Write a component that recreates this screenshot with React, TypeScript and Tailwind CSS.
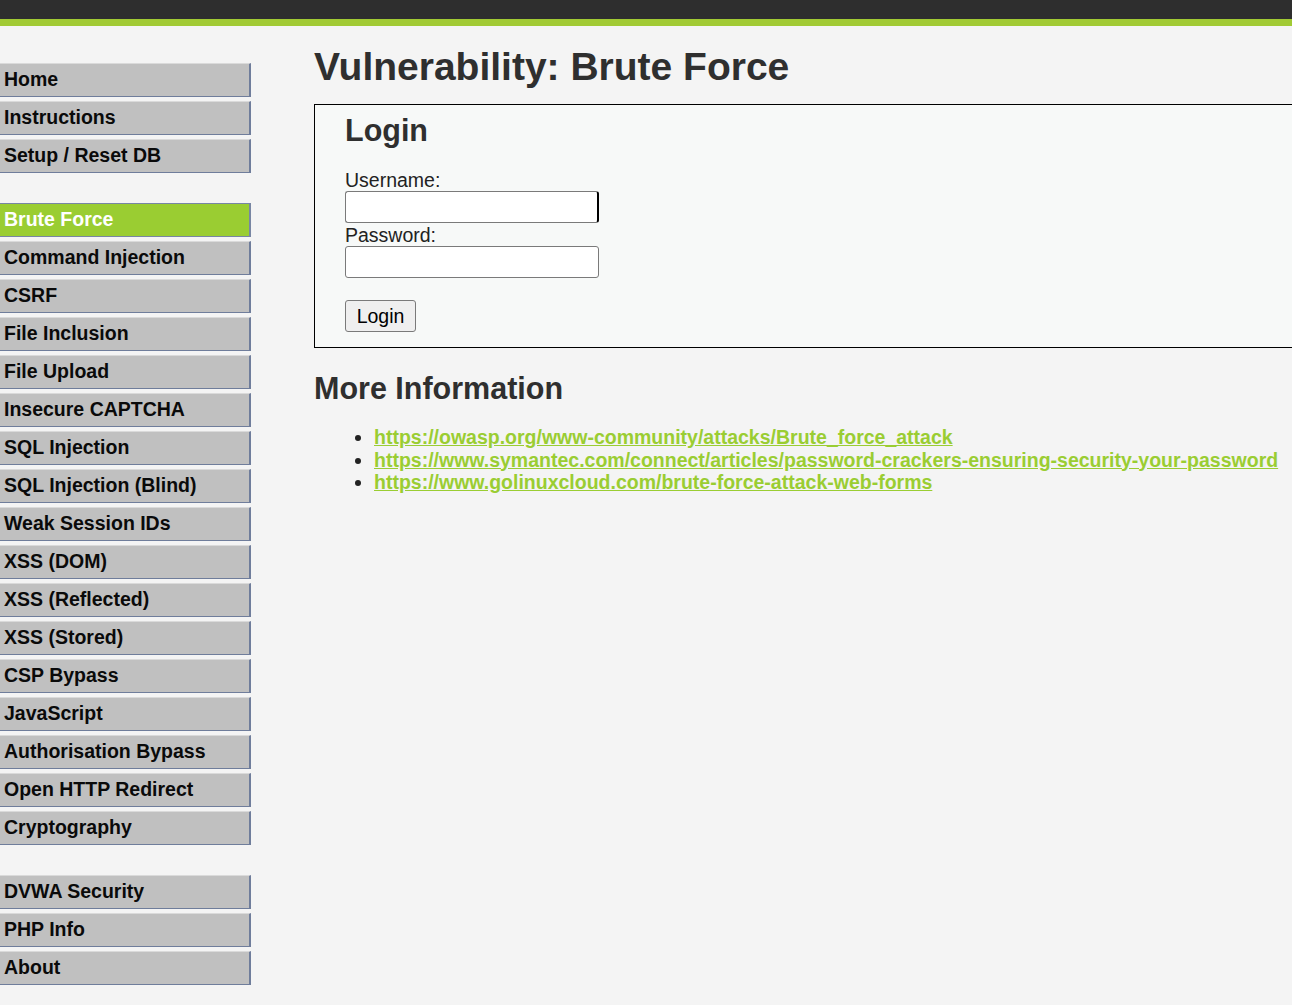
const groups: string[][] = [
  ['Home', 'Instructions', 'Setup / Reset DB'],
  [
    'Brute Force',
    'Command Injection',
    'CSRF',
    'File Inclusion',
    'File Upload',
    'Insecure CAPTCHA',
    'SQL Injection',
    'SQL Injection (Blind)',
    'Weak Session IDs',
    'XSS (DOM)',
    'XSS (Reflected)',
    'XSS (Stored)',
    'CSP Bypass',
    'JavaScript',
    'Authorisation Bypass',
    'Open HTTP Redirect',
    'Cryptography',
  ],
  ['DVWA Security', 'PHP Info', 'About'],
];

const links = [
  'https://owasp.org/www-community/attacks/Brute_force_attack',
  'https://www.symantec.com/connect/articles/password-crackers-ensuring-security-your-password',
  'https://www.golinuxcloud.com/brute-force-attack-web-forms',
];

function MenuItem({ label }: { label: string }) {
  const active = label === 'Brute Force';
  return (
    <li>
      <a
        href="#"
        className={
          active
            ? 'block h-[34px] w-[251px] pl-[4px] leading-[31px] text-[19.5px] font-bold text-white bg-[#9acd32] border border-l-0 border-[#7886a3] border-r-2'
            : 'block h-[34px] w-[251px] pl-[4px] leading-[31.5px] text-[19.5px] font-bold text-[#0a0a0a] bg-[#c0c0c0] border-t border-t-[#dadada] border-b border-b-[#6f7d9b] border-r-2 border-r-[#6f7d9b]'
        }
      >
        {label}
      </a>
    </li>
  );
}

export default function App() {
  return (
    <div
      className="min-h-screen w-full overflow-hidden bg-[#f4f4f4] text-[#333]"
      style={{ fontFamily: '"Liberation Sans", Arial, sans-serif' }}
    >
      <div className="h-[19px] bg-[#2e2e2e]" />
      <div className="h-[7px] bg-[#a1ca34]" />

      <div className="flex">
        <nav className="w-[251px] shrink-0 pt-[37px] flex flex-col gap-[30px]">
          {groups.map((g, i) => (
            <ul key={i} className="flex flex-col gap-[4px]">
              {g.map((label) => (
                <MenuItem key={label} label={label} />
              ))}
            </ul>
          ))}
        </nav>

        <main className="ml-[63px] flex-1 min-w-0">
          <h1 className="mt-[18px] text-[39px] leading-[45px] font-bold text-[#2f2f2f] whitespace-nowrap">
            Vulnerability: Brute Force
          </h1>

          <div className="mt-[15px] w-[1100px] border border-black bg-[#f7f9f8] pl-[30px] pt-[8px] pb-[15px]">
            <h2 className="text-[30.5px] leading-[35px] font-bold text-[#2f2f2f]">Login</h2>
            <form className="mt-[21px] flex flex-col items-start text-[19.5px] leading-[22px] text-[#222]">
              <label>Username:</label>
              <input
                type="text"
                className="h-[32px] w-[254px] bg-white border border-[#7a7a7a] border-r-2 border-r-black rounded-[3px] outline-none"
              />
              <label className="mt-[1px]">Password:</label>
              <input
                type="password"
                className="h-[32px] w-[254px] bg-white border border-[#7a7a7a] rounded-[3px] outline-none"
              />
              <button
                type="button"
                className="mt-[22px] h-[32px] w-[71px] bg-[#efefef] border border-[#7a7a7a] rounded-[3px] text-[19.5px] text-black"
              >
                Login
              </button>
            </form>
          </div>

          <h2 className="mt-[23px] text-[30.5px] leading-[35px] font-bold text-[#2f2f2f]">More Information</h2>
          <ul className="mt-[20px] pl-[60px] list-disc text-[19.5px] leading-[22.5px] text-[#222]">
            {links.map((l) => (
              <li key={l}>
                <a href="#" className="font-bold text-[#9acd32] underline whitespace-nowrap">
                  {l}
                </a>
              </li>
            ))}
          </ul>
        </main>
      </div>
    </div>
  );
}
